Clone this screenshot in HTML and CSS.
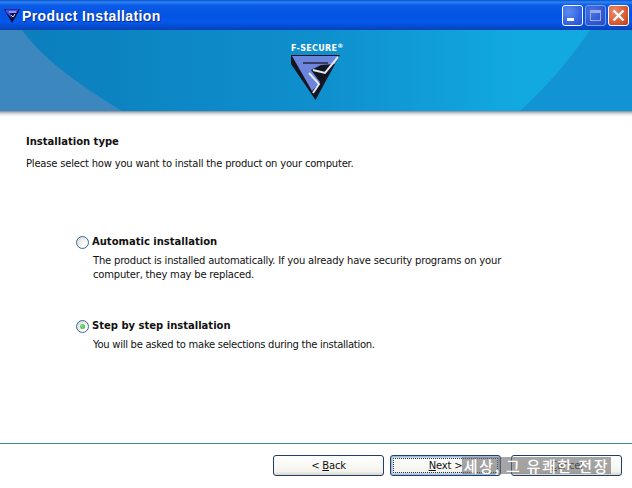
FILE: index.html
```html
<!DOCTYPE html>
<html lang="en">
<head>
<meta charset="utf-8">
<title>Product Installation</title>
<link rel="stylesheet" href="styles.css">
</head>
<body>
<div class="window">
  <header class="titlebar">
    <svg class="app-icon" width="18" height="16" viewBox="0 0 18 16">
      <path d="M1 1H17L9 15Z" fill="#0c0f38"/>
      <path d="M2.5 1.5H15.5L13.5 5H7L9 10.5L3 4Z" fill="#4a4cf0"/>
      <path d="M6 4H13M12 6L10 9L8 7" stroke="#d8dcff" stroke-width="1" fill="none"/>
    </svg>
    <span class="title">Product Installation</span>
    <div class="controls">
      <div class="ctl ctl-min"><span class="min-glyph"></span></div>
      <div class="ctl ctl-max"><span class="max-glyph"></span></div>
      <div class="ctl ctl-close">
        <svg width="13" height="13" viewBox="0 0 13 13"><path d="M1.5 1.5L11.5 11.5M11.5 1.5L1.5 11.5" stroke="#fff" stroke-width="2.4" fill="none"/></svg>
      </div>
    </div>
  </header>
  <div class="banner">
    <svg class="banner-art" width="632" height="81" viewBox="0 0 632 81" preserveAspectRatio="none">
      <defs>
        <linearGradient id="bg" x1="0" x2="1" y1="0" y2="0">
          <stop offset="0" stop-color="#0b7dbb"/>
          <stop offset="0.5" stop-color="#0f8fcd"/>
          <stop offset="0.82" stop-color="#12a9e0"/>
          <stop offset="1" stop-color="#12a9e0"/>
        </linearGradient>
      </defs>
      <rect width="632" height="81" fill="url(#bg)"/>
      <path d="M0 0H22C45 32 85 58 122 81H0Z" fill="#3d87bf"/>
      <path d="M632 0H590C570 30 545 58 520 81H632Z" fill="#1293d3"/>
    </svg>
    <div class="logo">
      <div class="logo-word">F-SECURE<sup class="reg">®</sup></div>
      <svg class="logo-mark" width="50" height="46" viewBox="0 0 50 46">
        <path d="M0 0H49L24.500 45L0 9Z" fill="#15151f"/>
        <path d="M1 1H48L44 9L30 10L20 15L29 27L21 36Z" fill="#6c86de"/>
        <path d="M47 2L34 18L22 15" stroke="#dfe8f6" stroke-width="2" fill="none"/>
        <path d="M18 18L28 29L22 38" stroke="#dfe8f6" stroke-width="2" fill="none"/>
        <path d="M12 8H37" stroke="#15151f" stroke-width="1.300"/>
      </svg>
    </div>
  </div>
  <div class="shade"></div>
  <main class="content">
    <h1 class="heading">Installation type</h1>
    <p class="lead">Please select how you want to install the product on your computer.</p>
    <div class="options">
      <section class="option">
        <div class="opt-head">
          <span class="radio"></span>
          <span class="opt-title">Automatic installation</span>
        </div>
        <p class="opt-text">The product is installed automatically. If you already have security programs on your<br>computer, they may be replaced.</p>
      </section>
      <section class="option">
        <div class="opt-head">
          <span class="radio radio-on"></span>
          <span class="opt-title">Step by step installation</span>
        </div>
        <p class="opt-text opt-text-tight">You will be asked to make selections during the installation.</p>
      </section>
    </div>
  </main>
  <footer class="footer">
    <button class="btn"><span>&lt; <u>B</u>ack</span></button>
    <button class="btn btn-default"><span class="focus"><u>N</u>ext &gt;</span></button>
    <button class="btn btn-last"><span><u>C</u>ancel</span></button>
  </footer>
  <div class="caption">세상, 그 유쾌한 전장</div>
</div>
</body>
</html>
```

FILE: styles.css
```css
* { box-sizing: border-box; }
html, body { margin: 0; padding: 0; }
body {
  width: 632px;
  height: 488px;
  overflow: hidden;
  background: #fff;
  font-family: "DejaVu Sans", sans-serif;
  font-size: 10px;
  color: #111;
}
.window {
  position: relative;
  width: 632px;
  height: 488px;
  display: flex;
  flex-direction: column;
  overflow: hidden;
}
.titlebar {
  flex: 0 0 30px;
  height: 30px;
  display: flex;
  align-items: center;
  padding: 2px 3px 0 3px;
  background: linear-gradient(180deg, #0a4fd0 0, #2f86f2 2px, #0b5ce8 5px, #0453e2 14px, #0458ea 22px, #0647c8 28px, #0a3fb0 30px);
}
.app-icon { flex: none; margin-right: 1px; }
.title {
  font-family: "Liberation Sans", sans-serif;
  font-weight: 700;
  font-size: 14px;
  letter-spacing: 0.4px;
  color: #fff;
  text-shadow: 1px 1px 0 #0a2a90;
}
.controls { margin-left: auto; display: flex; gap: 2px; margin-top: 1px; margin-bottom: 3px; }
.ctl {
  width: 21px;
  height: 21px;
  border: 1px solid #fff;
  border-radius: 3px;
  display: flex;
  align-items: center;
  justify-content: center;
}
.ctl-min { background: radial-gradient(circle at 30% 30%, #5c8df0, #2e5fe0 70%, #2a52c8); align-items: flex-end; justify-content: flex-start; padding: 0 0 4px 4px; }
.min-glyph { width: 7px; height: 3px; background: #fff; }
.ctl-max { background: radial-gradient(circle at 30% 30%, #4a74e0, #2d55cf 70%, #2a4cbc); border-color: #7f9de8; }
.max-glyph { width: 11px; height: 11px; border: 1px solid #94acec; border-top-width: 3px; }
.ctl-close { background: radial-gradient(circle at 30% 30%, #ea8a6c, #d8562f 65%, #b93c1c); }
.banner {
  position: relative;
  flex: 0 0 81px;
  height: 81px;
  overflow: hidden;
}
.banner-art { display: block; }
.logo {
  position: absolute;
  left: 291px;
  top: 14px;
  width: 60px;
  display: flex;
  flex-direction: column;
  align-items: flex-start;
}
.logo-word {
  font-family: "DejaVu Sans", sans-serif;
  font-weight: 700;
  font-size: 8px;
  line-height: 10px;
  letter-spacing: 0.3px;
  color: #fff;
  white-space: nowrap;
}
.reg { font-size: 6px; line-height: 0; vertical-align: 3px; }
.logo-mark { display: block; margin-top: 1px; }
.shade {
  flex: 0 0 6px;
  background: linear-gradient(180deg, #7d8a94 0, #c8ccd0 2px, #f0f0f0 4px, #fff 6px);
}
.content {
  flex: 1;
  padding: 18px 0 0 26px;
}
.heading {
  margin: 0;
  font-size: 10px;
  line-height: 14px;
  font-weight: 700;
}
.lead {
  margin: 8px 0 0;
  line-height: 14px;
  letter-spacing: -0.2px;
}
.options {
  margin: 64px 0 0 49px;
  display: flex;
  flex-direction: column;
  gap: 37px;
}
.opt-head { display: flex; align-items: center; gap: 3px; height: 14px; margin-left: 1px; }
.radio {
  width: 13px;
  height: 13px;
  border: 1px solid #3a6a9c;
  border-radius: 50%;
  background: radial-gradient(circle at 70% 70%, #fff 20%, #d6d6ce 90%);
  display: flex;
  align-items: center;
  justify-content: center;
}
.radio-on::after {
  content: "";
  width: 5px;
  height: 5px;
  border-radius: 50%;
  background: radial-gradient(circle at 40% 40%, #8fe58f, #2da52d);
}
.opt-title { font-weight: 700; line-height: 14px; }
.opt-text { margin: 5px 0 0 18px; line-height: 14px; letter-spacing: -0.2px; }
.opt-text-tight { letter-spacing: -0.28px; }
.footer {
  flex: 0 0 45px;
  border-top: 1px solid #3f8a9c;
  display: flex;
  justify-content: flex-end;
  gap: 6px;
  padding: 11px 10px 0 0;
}
.btn {
  width: 111px;
  height: 21px;
  padding: 0;
  border: 1px solid #1f3d6e;
  border-radius: 3px;
  background: linear-gradient(180deg, #fff, #f4f4ee 80%, #d9d5c8);
  font: inherit;
  letter-spacing: -0.2px;
  color: #111;
  display: flex;
  align-items: center;
  justify-content: center;
}
.btn-last { margin-left: 4px; }
.btn-default { box-shadow: inset 0 0 0 1px #9ebbe4, inset 0 0 0 2px #c3d4ee; }
.focus {
  width: 105px;
  height: 15px;
  border: 1px dotted #333;
  line-height: 13px;
  text-align: center;
}
.caption {
  position: absolute;
  left: 462px;
  top: 457px;
  width: 149px;
  height: 17px;
  background: rgba(110, 110, 110, 0.62);
  color: #fff;
  font-family: "Noto Sans CJK KR", sans-serif;
  font-size: 15px;
  font-weight: 500;
  line-height: 17px;
  letter-spacing: 1.7px;
  text-align: center;
  white-space: nowrap;
}
```
